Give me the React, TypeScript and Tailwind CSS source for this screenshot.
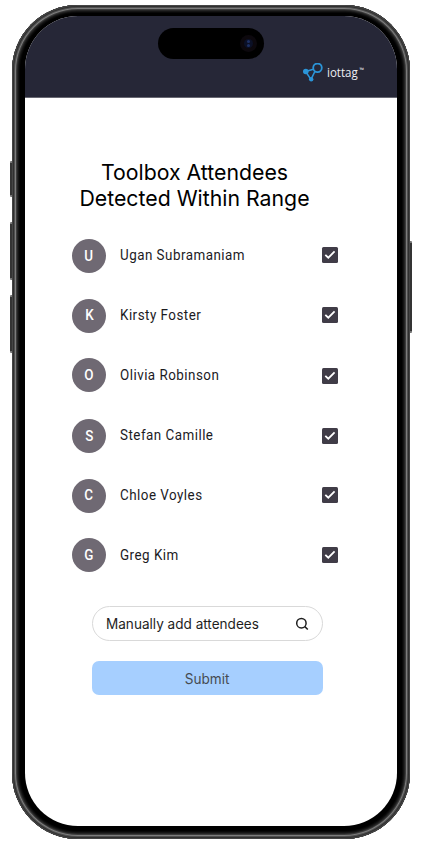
import React from "react";

type Attendee = { name: string; avatar: string; label: string; check: string };

const attendees: Attendee[] = [
  { name: "Ugan Subramaniam", avatar: "-ml-[0.5px]", label: "-ml-[0.5px]", check: "mb-[2px]" },
  { name: "Kirsty Foster", avatar: "mb-px", label: "", check: "mb-[2px]" },
  { name: "Olivia Robinson", avatar: "mb-[2px]", label: "", check: "" },
  { name: "Stefan Camille", avatar: "", label: "", check: "mb-px" },
  { name: "Chloe Voyles", avatar: "mb-px", label: "", check: "mb-[2px]" },
  { name: "Greg Kim", avatar: "mb-[2px]", label: "", check: "mb-[2px]" },
];

function Logo() {
  return (
    <div className="flex items-center text-[#eeeef2]">
      <svg width="21" height="20" viewBox="0 0 21 20" fill="none" stroke="#2b95d8" strokeWidth="1.5">
        <path d="M2.6 8.5L10.4 6.2M2.6 8.5L8 16.4L11.8 8.6" />
        <circle cx="14.5" cy="4.8" r="4.3" strokeWidth="1.8" />
        <circle cx="2.8" cy="8.5" r="2.8" fill="#2b95d8" stroke="none" />
        <circle cx="8.2" cy="16.3" r="2.2" fill="#2b95d8" stroke="none" />
      </svg>
      <span className="mb-px ml-[3px] origin-left scale-x-[0.96] font-['Open_Sans',sans-serif] text-[12px] leading-[16px]">
        iottag
      </span>
      <span className="mb-[7px] font-['Open_Sans',sans-serif] text-[6px] leading-[6px]">™</span>
    </div>
  );
}

function SideButton({ place }: { place: string }) {
  return (
    <div className={`absolute w-[3px] rounded-[1px] border-y-2 border-[#777] bg-[#343434] ${place}`} />
  );
}

function AttendeeRow({ name, avatar, label, check }: Attendee) {
  return (
    <li className="flex h-[60px] items-center">
      <div className="flex w-12 shrink-0">
        <span
          className={`flex size-[34px] items-center justify-center rounded-full bg-[#6f6973] font-[Roboto,sans-serif] text-[14px] font-medium text-white ${avatar}`}
        >
          <span className="scale-x-[0.957]">{name[0]}</span>
        </span>
      </div>
      <span
        className={`mb-[2px] flex-1 origin-left scale-x-[0.957] font-[Roboto,sans-serif] text-[14px] tracking-[0.5px] text-[#1c1b1f] ${label}`}
      >
        {name}
      </span>
      <span className={`flex h-[16px] w-[16px] items-center justify-center rounded-[1.5px] bg-[#403c47] ${check}`}>
        <svg width="16" height="16" viewBox="0 0 16 16" fill="none" stroke="white" strokeWidth="1.8">
          <path d="M3.3 7.8L6.3 10.7L12.6 4.4" />
        </svg>
      </span>
    </li>
  );
}

export default function App() {
  return (
    <div className="relative h-[850px] w-[423px] overflow-hidden bg-white pt-[5px] pl-[12px]">
      <SideButton place="left-[10px] top-[161px] h-[36px]" />
      <SideButton place="left-[10px] top-[222px] h-[58px]" />
      <SideButton place="left-[10px] top-[295px] h-[58px]" />
      <SideButton place="left-[409px] top-[241px] h-[92px]" />
      <div className="relative h-[834px] w-[398px] rounded-[66px] bg-black px-[13px] pt-[11px] shadow-[inset_0_0_0_1px_#454545,inset_0_0_0_2px_#303030,inset_0_0_0_3px_#505050,inset_0_0_0_4px_#7c7c7c,inset_0_0_0_5px_#3c3c3c,inset_0_0_0_6px_#242424,inset_0_0_0_7px_#141414,inset_0_0_0_8px_#080808]">
        <div className="flex h-[810px] w-[372px] flex-col overflow-hidden rounded-[53px] bg-white">
          <header className="flex h-[82px] shrink-0 flex-col items-end border-b border-[#686872] bg-[#262737]">
            <div className="mt-[12px] mr-[133px] flex h-[31px] w-[106px] items-center justify-end rounded-full bg-black pr-[7px]">
              <div className="flex size-[17px] items-center justify-center rounded-full bg-[#0c080d]">
                <div className="flex h-[9px] w-[9px] flex-col items-center justify-center gap-px rounded-full bg-[#0b1026]">
                  <i className="size-[3px] rounded-full bg-[#1d3064]" />
                  <i className="size-[3px] rounded-full bg-[#1d3064]" />
                </div>
              </div>
            </div>
            <div className="mt-[4px] mr-[33px]">
              <Logo />
            </div>
          </header>
          <main className="flex flex-col pl-[47px]">
            <h1 className="mt-[61px] w-[245px] scale-x-[0.967] text-center font-[Inter,sans-serif] text-[22px] leading-[26px] font-normal text-black">
              Toolbox Attendees
              <br />
              Detected Within Range
            </h1>
            <ul className="mt-[15px] w-[266px]">
              {attendees.map((a) => (
                <AttendeeRow key={a.name} {...a} />
              ))}
            </ul>
            <div className="mt-[20px] ml-[20px] flex h-[35px] w-[231px] items-center justify-between rounded-full border border-[#d9d9d9] pr-[13px] pl-[13px]">
              <span className="origin-left scale-x-[0.969] font-[Inter,sans-serif] text-[14px] text-[#1e1e1e]">
                Manually add attendees
              </span>
              <svg width="14" height="14" viewBox="0 0 14 14" fill="none" stroke="#1e1e1e" strokeWidth="1.5">
                <circle cx="6.4" cy="6.2" r="4.7" />
                <path d="M9.8 9.6L12.8 12.5" />
              </svg>
            </div>
            <button className="mt-[20px] ml-[20px] h-[34px] w-[231px] rounded-[7px] bg-[#a6cfff] font-[Inter,sans-serif] text-[14px] text-[#454b52]">
              <span className="inline-block scale-x-[0.969]">Submit</span>
            </button>
          </main>
        </div>
      </div>
    </div>
  );
}
